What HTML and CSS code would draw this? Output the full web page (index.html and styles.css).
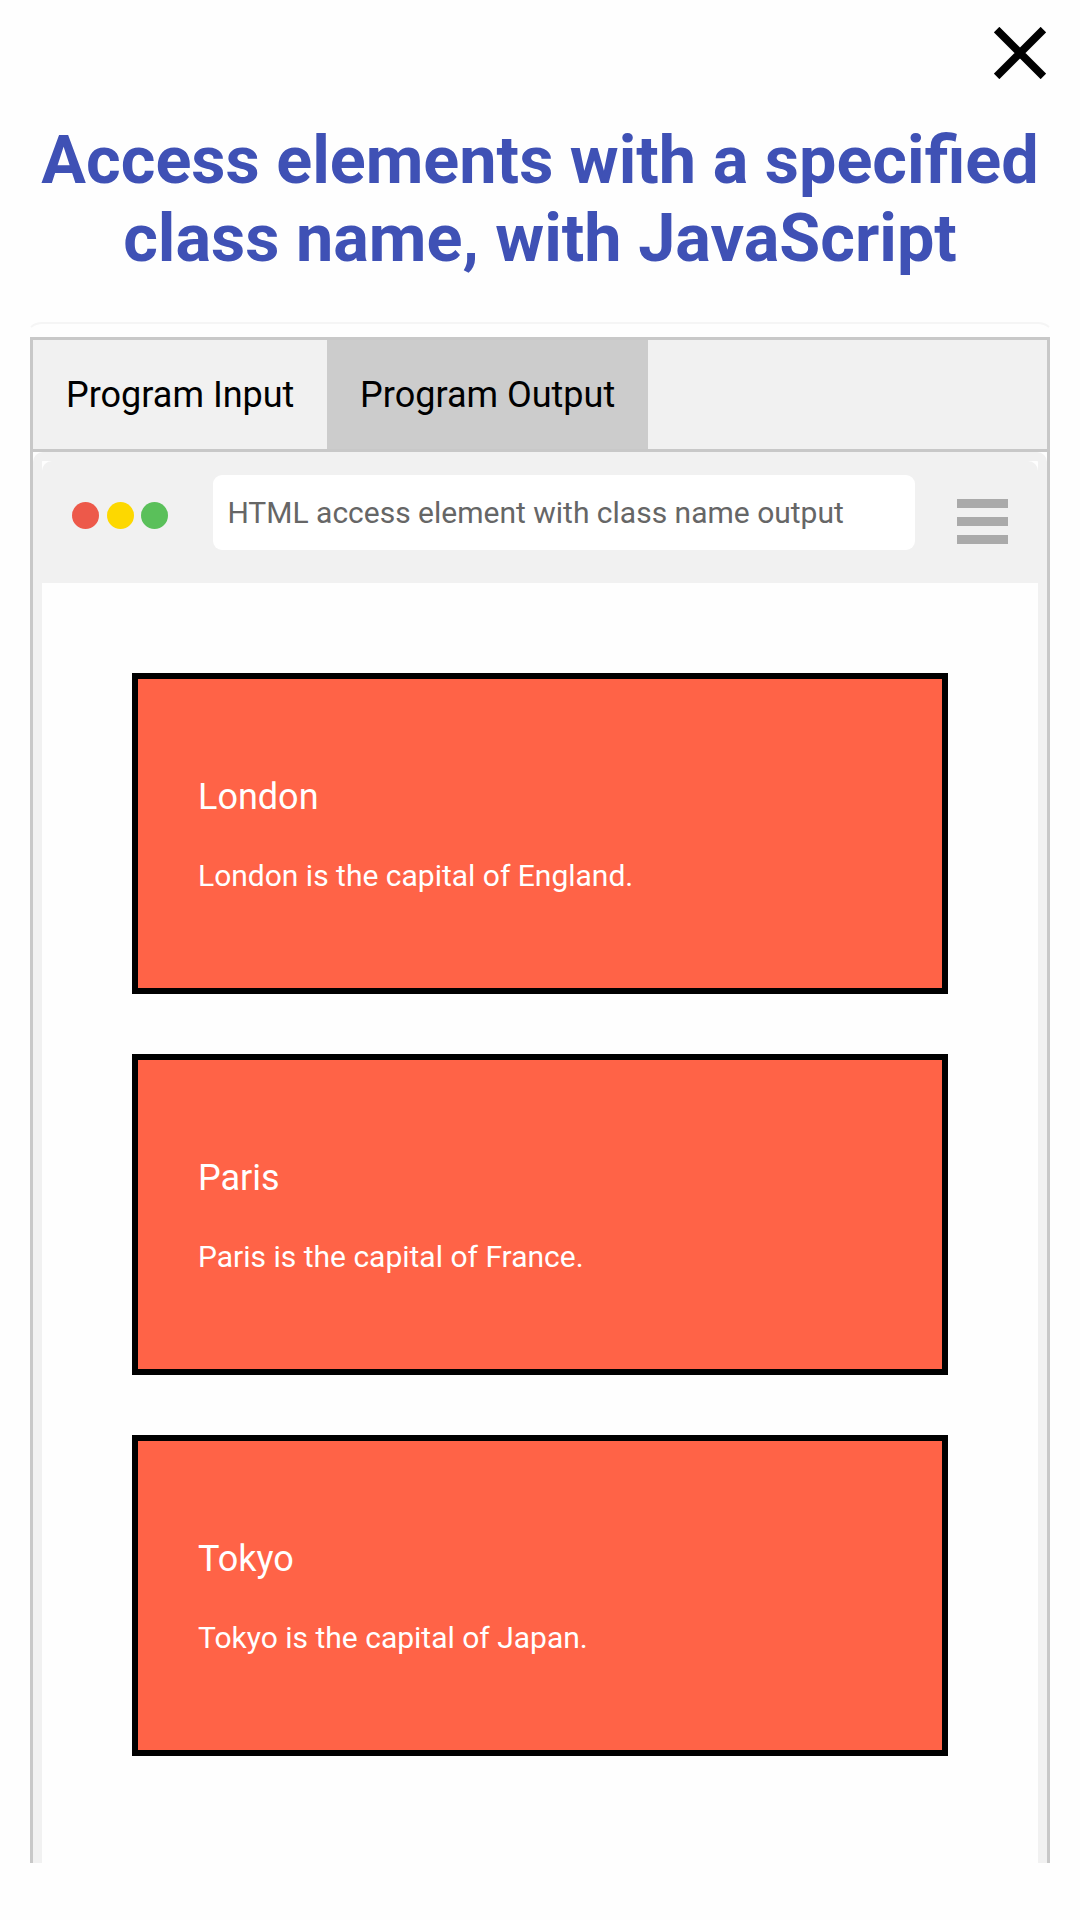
FILE: index.html
```html
<!DOCTYPE html>
<html lang="en">
<head>
<meta charset="utf-8">
<title>Access elements with a specified class name</title>
<link rel="stylesheet" href="styles.css">
</head>
<body>
<header class="topbar">
  <svg class="close" viewBox="0 0 52 52" role="img" aria-label="Close"><path d="M2.6 2.6 49.4 49.4M49.4 2.6 2.6 49.4"/></svg>
</header>
<main class="page">
  <h1 class="title">Access elements with a specified<br>class name, with JavaScript</h1>
  <svg class="edge" viewBox="0 0 1020 6" aria-hidden="true"><path d="M1 5Q6 1 12 1H1008Q1014 1 1019 5"/></svg>
  <nav class="tabs">
    <span class="tab">Program Input</span>
    <span class="tab active">Program Output</span>
  </nav>
  <section class="panel">
    <div class="browser">
      <div class="browser-bar">
        <div class="dots"><i class="dot red"></i><i class="dot yellow"></i><i class="dot green"></i></div>
        <div class="address">HTML access element with class name output</div>
        <div class="menu"><i></i><i></i><i></i></div>
      </div>
      <div class="content">
        <article class="city"><h2>London</h2><p>London is the capital of England.</p></article>
        <article class="city"><h2>Paris</h2><p>Paris is the capital of France.</p></article>
        <article class="city"><h2>Tokyo</h2><p>Tokyo is the capital of Japan.</p></article>
      </div>
    </div>
  </section>
</main>
</body>
</html>
```
FILE: styles.css
```css
* { box-sizing: border-box; }
body {
  margin: 0;
  height: 1920px;
  overflow: hidden;
  background: #fefefe;
  color: #000;
  font-family: Roboto, sans-serif;
}
.topbar {
  display: flex;
  justify-content: flex-end;
  height: 121px;
  padding: 26.5px 34px 0 0;
}
.close { width: 52px; height: 52px; }
.close path { fill: none; stroke: #000; stroke-width: 7.8; }
.page { padding: 0 30px; }
.title {
  margin: 0 -30px;
  height: 201px;
  color: #3f51b5;
  font-size: 66.55px;
  font-weight: 700;
  line-height: 78px;
  text-align: center;
}
.edge {
  display: block;
  width: 1020px;
  height: 6px;
  margin-bottom: 9px;
}
.edge path { fill: none; stroke: #f5f5f5; stroke-width: 2; }
.tabs {
  display: flex;
  height: 115px;
  border: 3px solid #c8c8c8;
  background: #f1f1f1;
}
.tab {
  padding: 2px 32.7px 0 33px;
  font-size: 36px;
  line-height: 107px;
  white-space: nowrap;
}
.tab.active { background: #ccc; }
.panel {
  height: 1411px;
  border: solid #c8c8c8;
  border-width: 0 3px;
}
.browser {
  height: 100%;
  border: 9px solid #f1f1f1;
  border-bottom: 0;
  border-radius: 10px 10px 0 0;
}
.browser-bar {
  display: flex;
  align-items: flex-start;
  height: 122px;
  padding: 14px 30px 0;
  border-radius: 10px 10px 0 0;
  background: #f1f1f1;
}
.dots { display: flex; gap: 7.5px; padding-top: 27px; }
.dot { width: 27px; height: 27px; border-radius: 50%; }
.red { background: #ed594a; }
.yellow { background: #fdd800; }
.green { background: #5ac05a; }
.address {
  width: 702px;
  height: 75px;
  margin-left: 45px;
  padding-left: 14.4px;
  border-radius: 9px;
  background: #fff;
  color: #666;
  font-size: 30px;
  line-height: 75px;
}
.menu {
  display: grid;
  gap: 9px;
  width: 51px;
  margin: 24px 0 0 auto;
}
.menu i { height: 9px; background: #aaa; }
.content {
  display: grid;
  gap: 60px;
  padding: 90px 90px 0;
}
.city {
  height: 321px;
  padding: 96px 60px 0;
  border: 6px solid #000;
  background: tomato;
  color: #fff;
}
.city h2 {
  margin: 0;
  font-size: 36px;
  font-weight: 400;
  line-height: 44px;
}
.city p {
  margin: 27px 0 0;
  font-size: 30px;
  line-height: 60px;
}
```
